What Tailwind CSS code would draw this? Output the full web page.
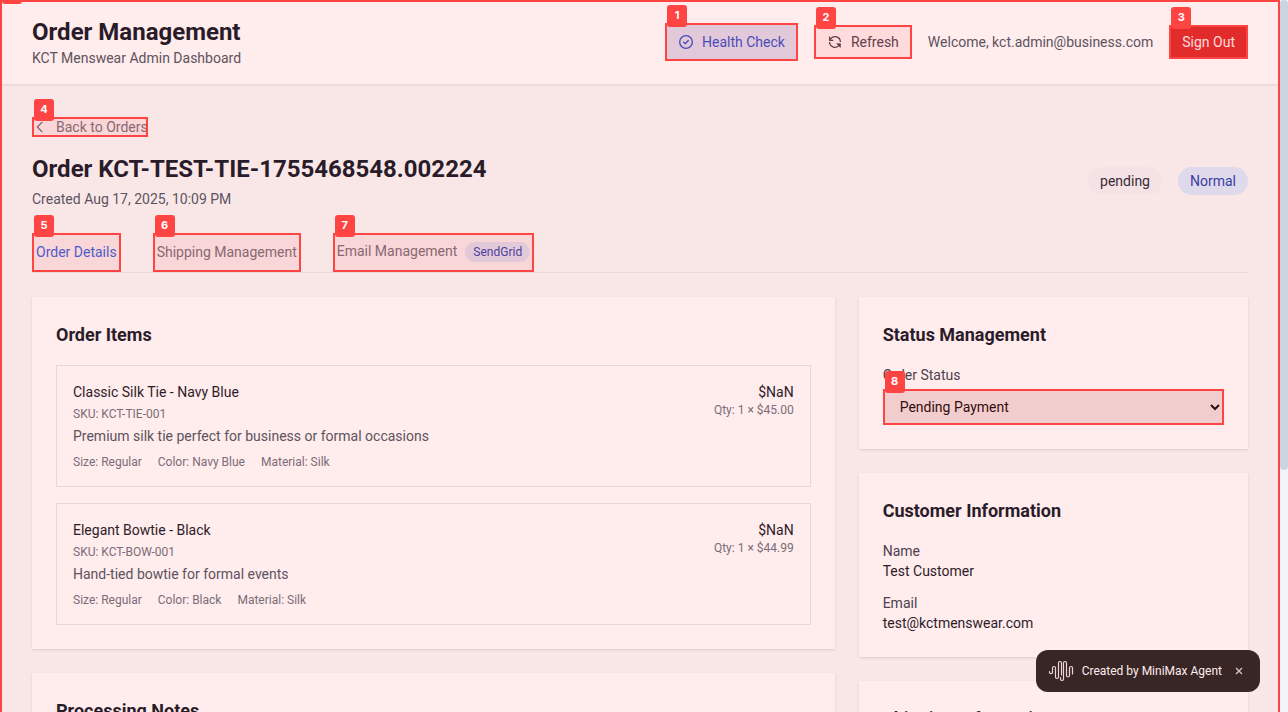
<!DOCTYPE html>
<html lang="en">
<head>
<meta charset="utf-8">
<meta name="viewport" content="width=device-width, initial-scale=1">
<title>Order Management</title>
<script src="https://cdn.jsdelivr.net/npm/@tailwindcss/browser@4"></script>
</head>
<body class="h-screen overflow-hidden flex bg-[#f1f5f9] font-[Roboto,sans-serif] text-sm text-[#111827]">
<div class="relative flex-1 min-w-0 h-full overflow-hidden bg-[#f9fafb]">
  <header class="bg-white border-b border-[#e5e7eb] shadow-xs px-8 py-4 flex items-center justify-between">
    <div>
      <h1 class="text-2xl font-bold">Order Management</h1>
      <p class="text-[#4b5563]">KCT Menswear Admin Dashboard</p>
    </div>
    <div class="flex items-center gap-4">
      <button type="button" class="relative flex items-center gap-2 border border-transparent bg-[#dbeafe] px-3 py-2 text-[#1d4ed8]">
        <svg class="size-4" viewBox="0 0 24 24" fill="none" stroke="currentColor" stroke-width="2" stroke-linecap="round" stroke-linejoin="round" aria-hidden="true"><circle cx="12" cy="12" r="9.5"/><path d="m8.500 12.200 2.300 2.300 4.700-4.700"/></svg>
        Health Check
        <span class="pointer-events-none absolute -inset-px z-20 border-2 border-[#ff4444] bg-[#ff4444]/10"><b class="absolute left-0 -top-5 flex h-[22px] w-5 items-center justify-center rounded-[3px] bg-[#ff4444] font-[Inter,sans-serif] text-[11px] text-white">1</b></span>
      </button>
      <button type="button" class="relative flex items-center gap-2 border border-[#d1d5db] px-3 py-1.5 text-[#374151]">
        <svg class="size-4" viewBox="0 0 16 16" fill="none" stroke="currentColor" stroke-width="1.3" stroke-linejoin="round" aria-hidden="true"><path d="M13.400 8A5.400 5.400 0 0 0 3.700 4.800L2.700 6.200"/><path d="M2.600 2.600v3.700h3.700"/><path d="M2.600 8a5.400 5.400 0 0 0 9.700 3.200l1-1.400"/><path d="M9.700 9.700h3.700v3.700z" fill="currentColor" stroke-width=".6"/></svg>
        Refresh
        <span class="pointer-events-none absolute -inset-px z-20 border-2 border-[#ff4444] bg-[#ff4444]/10"><b class="absolute left-0 -top-5 flex h-[22px] w-5 items-center justify-center rounded-[3px] bg-[#ff4444] font-[Inter,sans-serif] text-[11px] text-white">2</b></span>
      </button>
      <span class="text-[#4b5563]">Welcome, kct.admin@business.com</span>
      <button type="button" class="relative border border-transparent bg-[#dc2626] px-3 py-1.5 text-white">
        Sign Out
        <span class="pointer-events-none absolute -inset-px z-20 border-2 border-[#ff4444] bg-[#ff4444]/10"><b class="absolute left-0 -top-5 flex h-[22px] w-5 items-center justify-center rounded-[3px] bg-[#ff4444] font-[Inter,sans-serif] text-[11px] text-white">3</b></span>
      </button>
    </div>
  </header>

  <main class="px-8 py-8">
    <button type="button" class="relative mb-4 flex items-center gap-2 text-[#6b7280]">
      <svg class="size-4" viewBox="0 0 24 24" fill="none" stroke="currentColor" stroke-width="2" stroke-linecap="round" stroke-linejoin="round" aria-hidden="true"><path d="m15 19-7-7 7-7"/></svg>
      Back to Orders
      <span class="pointer-events-none absolute inset-0 z-20 border-2 border-[#ff4444] bg-[#ff4444]/10"><b class="absolute left-0 -top-5 flex h-[22px] w-5 items-center justify-center rounded-[3px] bg-[#ff4444] font-[Inter,sans-serif] text-[11px] text-white">4</b></span>
    </button>

    <div class="flex items-center justify-between">
      <div>
        <h2 class="text-2xl font-bold">Order KCT-TEST-TIE-1755468548.002224</h2>
        <p class="mt-1 text-[#4b5563]">Created Aug 17, 2025, 10:09 PM</p>
      </div>
      <div class="flex items-center gap-4">
        <span class="rounded-full bg-[#f3f4f6] px-3 py-1 text-[#1f2937]">pending</span>
        <span class="rounded-full bg-[#dbeafe] px-3 py-1 text-[#1e40af]">Normal</span>
      </div>
    </div>

    <nav class="mt-6 flex gap-8 border-b border-[#e5e7eb]" aria-label="Order sections">
      <button type="button" class="relative border-b-2 border-[#3b82f6] px-1 py-2 text-[#2563eb]">
        Order Details
        <span class="pointer-events-none absolute inset-x-0 top-0 -bottom-0.5 z-20 border-2 border-[#ff4444] bg-[#ff4444]/10"><b class="absolute left-0 -top-5 flex h-[22px] w-5 items-center justify-center rounded-[3px] bg-[#ff4444] font-[Inter,sans-serif] text-[11px] text-white">5</b></span>
      </button>
      <button type="button" class="relative border-b-2 border-transparent px-1 py-2 text-[#6b7280]">
        Shipping Management
        <span class="pointer-events-none absolute inset-x-0 top-0 -bottom-0.5 z-20 border-2 border-[#ff4444] bg-[#ff4444]/10"><b class="absolute left-0 -top-5 flex h-[22px] w-5 items-center justify-center rounded-[3px] bg-[#ff4444] font-[Inter,sans-serif] text-[11px] text-white">6</b></span>
      </button>
      <button type="button" class="relative border-b-2 border-transparent px-1 py-2 text-[#6b7280]">
        Email Management<span class="ml-2 inline-block rounded-full bg-[#dbeafe] px-2 py-0.5 text-xs text-[#1e40af]">SendGrid</span>
        <span class="pointer-events-none absolute inset-x-0 top-0 -bottom-0.5 z-20 border-2 border-[#ff4444] bg-[#ff4444]/10"><b class="absolute left-0 -top-5 flex h-[22px] w-5 items-center justify-center rounded-[3px] bg-[#ff4444] font-[Inter,sans-serif] text-[11px] text-white">7</b></span>
      </button>
    </nav>

    <div class="mt-6 grid grid-cols-3 items-start gap-6">
      <div class="col-span-2 flex flex-col gap-6">
        <section class="bg-white p-6 shadow-sm">
          <h3 class="mb-4 text-lg font-bold">Order Items</h3>
          <div class="flex flex-col gap-4">
            <article class="flex justify-between border border-[#e5e7eb] p-4">
              <div>
                <h4>Classic Silk Tie - Navy Blue</h4>
                <p class="mt-1 text-xs text-[#6b7280]">SKU: KCT-TIE-001</p>
                <p class="mt-1 text-[#4b5563]">Premium silk tie perfect for business or formal occasions</p>
                <div class="mt-2 flex gap-4 text-xs text-[#6b7280]"><span>Size: Regular</span><span>Color: Navy Blue</span><span>Material: Silk</span></div>
              </div>
              <div class="text-right">
                <p>$NaN</p>
                <p class="text-xs text-[#6b7280]">Qty: 1 × $45.00</p>
              </div>
            </article>
            <article class="flex justify-between border border-[#e5e7eb] p-4">
              <div>
                <h4>Elegant Bowtie - Black</h4>
                <p class="mt-1 text-xs text-[#6b7280]">SKU: KCT-BOW-001</p>
                <p class="mt-1 text-[#4b5563]">Hand-tied bowtie for formal events</p>
                <div class="mt-2 flex gap-4 text-xs text-[#6b7280]"><span>Size: Regular</span><span>Color: Black</span><span>Material: Silk</span></div>
              </div>
              <div class="text-right">
                <p>$NaN</p>
                <p class="text-xs text-[#6b7280]">Qty: 1 × $44.99</p>
              </div>
            </article>
          </div>
        </section>
        <section class="bg-white p-6 shadow-sm">
          <h3 class="text-lg font-bold">Processing Notes</h3>
        </section>
      </div>

      <div class="flex flex-col gap-6">
        <section class="bg-white p-6 shadow-sm">
          <h3 class="mb-4 text-lg font-bold">Status Management</h3>
          <label for="status" class="mb-1 block text-[#374151]">Order Status</label>
          <div class="relative">
            <select id="status" class="block h-9 w-full border border-[#d1d5db] bg-[#efefef] px-3 text-black">
              <option>Pending Payment</option>
            </select>
            <span class="pointer-events-none absolute inset-0 z-20 border-2 border-[#ff4444] bg-[#ff4444]/10"><b class="absolute left-0 -top-5 flex h-[22px] w-5 items-center justify-center rounded-[3px] bg-[#ff4444] font-[Inter,sans-serif] text-[11px] text-white">8</b></span>
          </div>
        </section>
        <section class="bg-white p-6 shadow-sm">
          <h3 class="mb-4 text-lg font-bold">Customer Information</h3>
          <dl>
            <dt class="text-[#374151]">Name</dt>
            <dd class="mb-3">Test Customer</dd>
            <dt class="text-[#374151]">Email</dt>
            <dd>test@kctmenswear.com</dd>
          </dl>
        </section>
        <section class="bg-white p-6 shadow-sm">
          <h3 class="text-lg font-bold">Shipping Information</h3>
        </section>
      </div>
    </div>
  </main>

  <aside class="absolute right-5 bottom-5 flex h-[42px] items-center rounded-xl bg-[#222222] pr-4 pl-3 text-xs text-white">
    <svg class="mr-2 h-[22px] w-[26px]" viewBox="0 0 26 22" fill="none" stroke="#efe6e6" stroke-width="1.2" stroke-linecap="round" stroke-linejoin="round" aria-hidden="true"><path d="M1.500 11.500v.7a1.500 1.500 0 0 0 3 0V8a1.500 1.500 0 0 1 3 0v9a1.500 1.500 0 0 0 3 0V3a1.500 1.500 0 0 1 3 0v12"/><path d="M12.500 17.500V19a1.500 1.500 0 0 0 3 0V3a1.500 1.500 0 0 1 3 0v12.500a1.500 1.500 0 0 0 3 0V8a1.500 1.500 0 0 1 3 0v6"/></svg>
    <span>Created by MiniMax Agent</span>
    <button type="button" aria-label="Close" class="ml-3 text-[#d0d0d0]"><svg class="size-2.5" viewBox="0 0 10 10" fill="none" stroke="currentColor" stroke-width="1.4" aria-hidden="true"><path d="m2 2 6 6m0-6-6 6"/></svg></button>
  </aside>

  <div class="pointer-events-none absolute inset-0 z-10 border-2 border-b-0 border-[#ff4444] bg-[#ff4444]/10"><b class="absolute left-0 -top-5 h-[22px] w-5 rounded-[3px] bg-[#ff4444]"></b></div>
</div>
<div class="h-full w-2"><div class="h-[66%] rounded bg-[#cbd5e1]"></div></div>
</body>
</html>
